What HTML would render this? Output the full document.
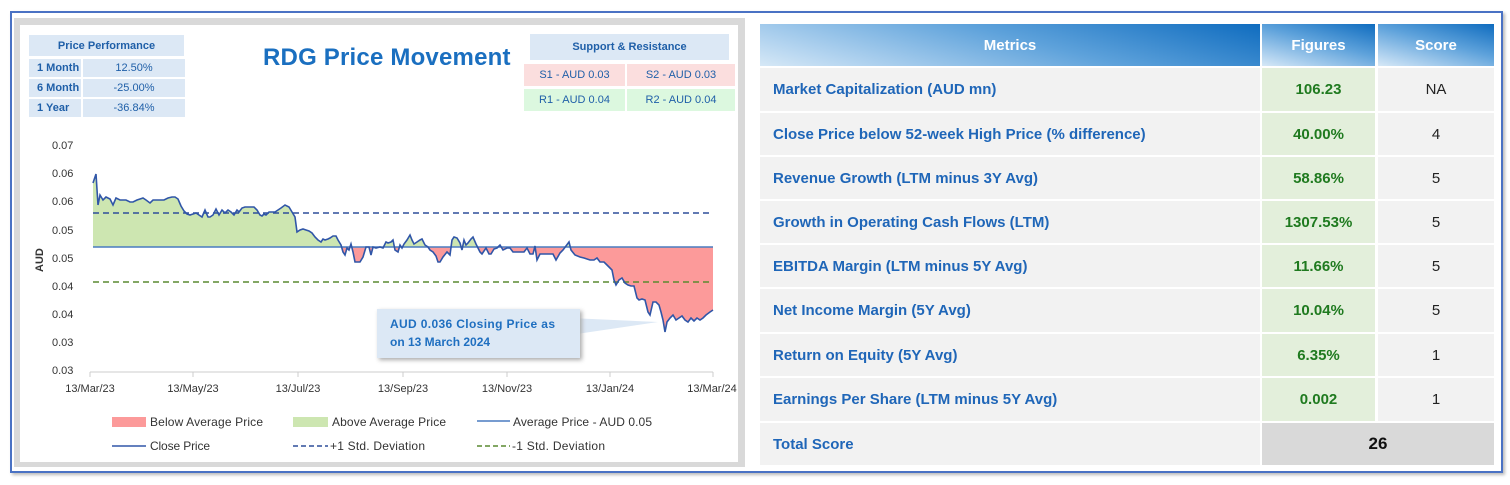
<!DOCTYPE html>
<html><head><meta charset="utf-8"><style>
*{margin:0;padding:0;box-sizing:border-box}
body{width:1510px;height:485px;background:#fff;position:relative;font-family:"Liberation Sans",sans-serif;overflow:hidden}
.abs{position:absolute}
.outer{left:10px;top:11px;width:1493px;height:462px;border:2px solid #4a72c4;box-shadow:2px 2px 3px #bbb}
.lp{left:14px;top:18px;width:731px;height:449px;background:#d9d9d9}
.lw{left:20px;top:25px;width:718px;height:437px;background:#fff}
.cell{position:absolute;background:#dce8f5;color:#1f5fa8;font-size:11px;display:flex;align-items:center;white-space:nowrap}
.sr{position:absolute;font-size:11px;color:#1f5fa8;display:flex;align-items:center;justify-content:center}
.t{position:absolute;display:flex;align-items:center;font-size:15px}
.h{background:linear-gradient(195deg,#0f6cbf 0%,#5ea2db 45%,#b5d5f0 85%,#d6e8f6 100%);color:#fff;justify-content:center;font-weight:bold}
.m{background:#f2f2f2;color:#1f66b8;font-weight:bold;padding-left:13px}
.f{background:#e3efdb;color:#1f7a1f;font-weight:bold;justify-content:center}
.s{background:#f2f2f2;color:#222;justify-content:center}
.ax{position:absolute;font-size:11px;color:#333}
</style></head><body>
<div class="abs outer"></div>
<div class="abs lp"></div>
<div class="abs lw"></div>

<div class="cell" style="left:29px;top:35px;width:155px;height:21px;justify-content:center;font-weight:bold">Price Performance</div>
<div class="cell" style="left:29px;top:59px;width:52px;height:18px;padding-left:8px;font-weight:bold">1 Month</div>
<div class="cell" style="left:83px;top:59px;width:102px;height:18px;justify-content:center">12.50%</div>
<div class="cell" style="left:29px;top:79px;width:52px;height:18px;padding-left:8px;font-weight:bold">6 Month</div>
<div class="cell" style="left:83px;top:79px;width:102px;height:18px;justify-content:center">-25.00%</div>
<div class="cell" style="left:29px;top:99px;width:52px;height:18px;padding-left:8px;font-weight:bold">1 Year</div>
<div class="cell" style="left:83px;top:99px;width:102px;height:18px;justify-content:center">-36.84%</div>

<div class="abs" style="left:263px;top:44px;font-size:24px;font-weight:bold;color:#1a6fc0;letter-spacing:0.2px">RDG Price Movement</div>

<div class="cell" style="left:530px;top:34px;width:199px;height:26px;justify-content:center;font-weight:bold">Support &amp; Resistance</div>
<div class="sr" style="left:524px;top:64px;width:101px;height:22px;background:#fbdede">S1 - AUD 0.03</div>
<div class="sr" style="left:627px;top:64px;width:108px;height:22px;background:#fbdede">S2 - AUD 0.03</div>
<div class="sr" style="left:524px;top:89px;width:101px;height:22px;background:#dcf8df">R1 - AUD 0.04</div>
<div class="sr" style="left:627px;top:89px;width:108px;height:22px;background:#dcf8df">R2 - AUD 0.04</div>

<div class="ax" style="left:52px;top:140px">0.07</div>
<div class="ax" style="left:52px;top:168px">0.06</div>
<div class="ax" style="left:52px;top:196px">0.06</div>
<div class="ax" style="left:52px;top:225px">0.05</div>
<div class="ax" style="left:52px;top:253px">0.05</div>
<div class="ax" style="left:52px;top:281px">0.04</div>
<div class="ax" style="left:52px;top:309px">0.04</div>
<div class="ax" style="left:52px;top:337px">0.03</div>
<div class="ax" style="left:52px;top:365px">0.03</div>
<div class="abs" style="left:34px;top:272px;font-size:11px;font-weight:bold;color:#333;transform:rotate(-90deg);transform-origin:left top">AUD</div>

<svg class="abs" style="left:0;top:0" width="750" height="485">
<defs>
<clipPath id="up"><rect x="0" y="0" width="750" height="247"/></clipPath>
<clipPath id="dn"><rect x="0" y="247" width="750" height="200"/></clipPath>
<polygon id="area" points="93,247 93,183 96,174 98,205 100,195 103,200 106,197 110,199 113,205 116,198 120,200 123,200 126,200 130,202 133,202 137,200 140,199 143,198 146,200 150,203 153,200 157,200 160,200 164,200 168,198 172,197 175,197 178,199 181,206 184,211 187,214 190,215 193,214 196,213 199,215 202,217 205,210 208,217 210,217 213,215 216,209 219,215 222,210 225,213 228,210 231,212 234,215 237,210 239,212 242,208 245,207 248,207 251,207 254,207 257,210 260,215 262,216 264,214 266,215 269,212 272,212 275,212 278,210 281,208 285,205 289,207 292,212 295,217 297,232 300,230 303,229 306,230 309,231 312,233 315,237 318,240 321,242 323,239 325,240 328,239 330,238 333,236 336,236 338,240 341,245 343,252 345,255 347,248 349,250 351,244 353,252 355,262 357,262 360,262 363,257 366,247 369,247 371,255 373,247 376,248 380,247 383,248 386,242 388,243 391,242 393,240 395,250 398,252 400,245 402,248 404,244 407,240 410,235 412,240 414,244 417,242 420,240 422,239 425,245 428,247 430,250 433,252 436,256 438,262 440,262 443,257 447,252 450,255 452,240 454,237 457,238 460,243 462,250 464,240 466,245 468,243 471,239 473,237 476,244 480,252 482,254 486,248 489,254 491,254 494,249 497,248 500,245 503,250 507,248 510,248 513,252 516,252 520,252 524,252 527,248 530,254 533,254 535,246 537,260 540,254 543,254 547,254 550,254 553,254 556,260 560,253 563,250 566,246 569,242 571,250 575,255 580,257 584,258 590,260 594,260 597,258 600,262 604,262 607,265 610,268 612,270 614,280 616,285 619,280 622,278 625,283 628,285 631,286 634,286 637,298 639,300 642,299 645,300 648,312 650,315 653,302 656,302 659,305 661,312 663,320 665,332 667,322 670,318 673,315 676,320 679,318 682,316 685,320 688,322 691,318 694,321 697,318 700,320 703,318 706,315 710,312 713,310 713,247"/>
</defs>
<use href="#area" clip-path="url(#up)" fill="#cde6b1"/>
<use href="#area" clip-path="url(#dn)" fill="#fc9a9a"/>
<line x1="93" y1="247" x2="713" y2="247" stroke="#4a7cc0" stroke-width="1.5"/>
<line x1="93" y1="213" x2="713" y2="213" stroke="#2f4f9a" stroke-width="1.5" stroke-dasharray="6,4"/>
<line x1="93" y1="282" x2="713" y2="282" stroke="#5a8a30" stroke-width="1.5" stroke-dasharray="6,4"/>
<polyline fill="none" stroke="#3056a8" stroke-width="1.6" points="93,183 96,174 98,205 100,195 103,200 106,197 110,199 113,205 116,198 120,200 123,200 126,200 130,202 133,202 137,200 140,199 143,198 146,200 150,203 153,200 157,200 160,200 164,200 168,198 172,197 175,197 178,199 181,206 184,211 187,214 190,215 193,214 196,213 199,215 202,217 205,210 208,217 210,217 213,215 216,209 219,215 222,210 225,213 228,210 231,212 234,215 237,210 239,212 242,208 245,207 248,207 251,207 254,207 257,210 260,215 262,216 264,214 266,215 269,212 272,212 275,212 278,210 281,208 285,205 289,207 292,212 295,217 297,232 300,230 303,229 306,230 309,231 312,233 315,237 318,240 321,242 323,239 325,240 328,239 330,238 333,236 336,236 338,240 341,245 343,252 345,255 347,248 349,250 351,244 353,252 355,262 357,262 360,262 363,257 366,247 369,247 371,255 373,247 376,248 380,247 383,248 386,242 388,243 391,242 393,240 395,250 398,252 400,245 402,248 404,244 407,240 410,235 412,240 414,244 417,242 420,240 422,239 425,245 428,247 430,250 433,252 436,256 438,262 440,262 443,257 447,252 450,255 452,240 454,237 457,238 460,243 462,250 464,240 466,245 468,243 471,239 473,237 476,244 480,252 482,254 486,248 489,254 491,254 494,249 497,248 500,245 503,250 507,248 510,248 513,252 516,252 520,252 524,252 527,248 530,254 533,254 535,246 537,260 540,254 543,254 547,254 550,254 553,254 556,260 560,253 563,250 566,246 569,242 571,250 575,255 580,257 584,258 590,260 594,260 597,258 600,262 604,262 607,265 610,268 612,270 614,280 616,285 619,280 622,278 625,283 628,285 631,286 634,286 637,298 639,300 642,299 645,300 648,312 650,315 653,302 656,302 659,305 661,312 663,320 665,332 667,322 670,318 673,315 676,320 679,318 682,316 685,320 688,322 691,318 694,321 697,318 700,320 703,318 706,315 710,312 713,310"/>
<line x1="90" y1="372" x2="713" y2="372" stroke="#ccc" stroke-width="1"/>
<g stroke="#ccc"><line x1="90" y1="372" x2="90" y2="377"/><line x1="193" y1="372" x2="193" y2="377"/><line x1="298" y1="372" x2="298" y2="377"/><line x1="403" y1="372" x2="403" y2="377"/><line x1="507" y1="372" x2="507" y2="377"/><line x1="610" y1="372" x2="610" y2="377"/><line x1="713" y1="372" x2="713" y2="377"/></g>
<polygon points="570,318 658,322 570,335" fill="#dce8f5"/>
<rect x="377" y="309" width="203" height="49" fill="#dce8f5" style="filter:drop-shadow(2px 2px 2px #aaa)"/>
<text x="390" y="328" font-family="Liberation Sans" font-size="12" font-weight="bold" fill="#1f6fc0" textLength="165">AUD 0.036 Closing Price as</text>
<text x="390" y="346" font-family="Liberation Sans" font-size="12" font-weight="bold" fill="#1f6fc0">on 13 March 2024</text>
<g font-family="Liberation Sans" font-size="11" fill="#333" text-anchor="middle">
<text x="90" y="392">13/Mar/23</text><text x="193" y="392">13/May/23</text><text x="298" y="392">13/Jul/23</text><text x="403" y="392">13/Sep/23</text><text x="507" y="392">13/Nov/23</text><text x="610" y="392">13/Jan/24</text><text x="712" y="392">13/Mar/24</text>
</g>
<rect x="112" y="417" width="34" height="10" fill="#fc9a9a"/>
<rect x="293" y="417" width="35" height="10" fill="#cde6b1"/>
<line x1="477" y1="421" x2="510" y2="421" stroke="#4a7cc0" stroke-width="1.5"/>
<line x1="112" y1="446" x2="146" y2="446" stroke="#3056a8" stroke-width="1.5"/>
<line x1="293" y1="446" x2="328" y2="446" stroke="#2f4f9a" stroke-width="1.5" stroke-dasharray="5,3"/>
<line x1="477" y1="446" x2="510" y2="446" stroke="#5a8a30" stroke-width="1.5" stroke-dasharray="5,3"/>
<g font-family="Liberation Sans" font-size="12" fill="#333">
<text x="150" y="426" textLength="113">Below Average Price</text><text x="332" y="426" textLength="114">Above Average Price</text><text x="513" y="426" textLength="139">Average Price - AUD 0.05</text>
<text x="150" y="450" textLength="60">Close Price</text><text x="330" y="450" textLength="95">+1 Std. Deviation</text><text x="512" y="450" textLength="93">-1 Std. Deviation</text>
</g>
</svg>

<div class="t h" style="left:760px;top:24px;width:500px;height:42px">Metrics</div>
<div class="t h" style="left:1262px;top:24px;width:113px;height:42px">Figures</div>
<div class="t h" style="left:1378px;top:24px;width:116px;height:42px">Score</div>

<div class="t m" style="left:760px;top:68px;width:500px;height:43px">Market Capitalization (AUD mn)</div>
<div class="t f" style="left:1262px;top:68px;width:113px;height:43px">106.23</div>
<div class="t s" style="left:1378px;top:68px;width:116px;height:43px">NA</div>

<div class="t m" style="left:760px;top:113px;width:500px;height:42px">Close Price below 52-week High Price (% difference)</div>
<div class="t f" style="left:1262px;top:113px;width:113px;height:42px">40.00%</div>
<div class="t s" style="left:1378px;top:113px;width:116px;height:42px">4</div>

<div class="t m" style="left:760px;top:157px;width:500px;height:42px">Revenue Growth (LTM minus 3Y Avg)</div>
<div class="t f" style="left:1262px;top:157px;width:113px;height:42px">58.86%</div>
<div class="t s" style="left:1378px;top:157px;width:116px;height:42px">5</div>

<div class="t m" style="left:760px;top:201px;width:500px;height:42px">Growth in Operating Cash Flows (LTM)</div>
<div class="t f" style="left:1262px;top:201px;width:113px;height:42px">1307.53%</div>
<div class="t s" style="left:1378px;top:201px;width:116px;height:42px">5</div>

<div class="t m" style="left:760px;top:245px;width:500px;height:42px">EBITDA Margin (LTM minus 5Y Avg)</div>
<div class="t f" style="left:1262px;top:245px;width:113px;height:42px">11.66%</div>
<div class="t s" style="left:1378px;top:245px;width:116px;height:42px">5</div>

<div class="t m" style="left:760px;top:289px;width:500px;height:43px">Net Income Margin (5Y Avg)</div>
<div class="t f" style="left:1262px;top:289px;width:113px;height:43px">10.04%</div>
<div class="t s" style="left:1378px;top:289px;width:116px;height:43px">5</div>

<div class="t m" style="left:760px;top:334px;width:500px;height:42px">Return on Equity (5Y Avg)</div>
<div class="t f" style="left:1262px;top:334px;width:113px;height:42px">6.35%</div>
<div class="t s" style="left:1378px;top:334px;width:116px;height:42px">1</div>

<div class="t m" style="left:760px;top:378px;width:500px;height:43px">Earnings Per Share (LTM minus 5Y Avg)</div>
<div class="t f" style="left:1262px;top:378px;width:113px;height:43px">0.002</div>
<div class="t s" style="left:1378px;top:378px;width:116px;height:43px">1</div>

<div class="t m" style="left:760px;top:423px;width:500px;height:42px">Total Score</div>
<div class="t" style="left:1262px;top:423px;width:232px;height:42px;background:#d9d9d9;justify-content:center;font-weight:bold;font-size:17px;color:#111">26</div>
</body></html>
